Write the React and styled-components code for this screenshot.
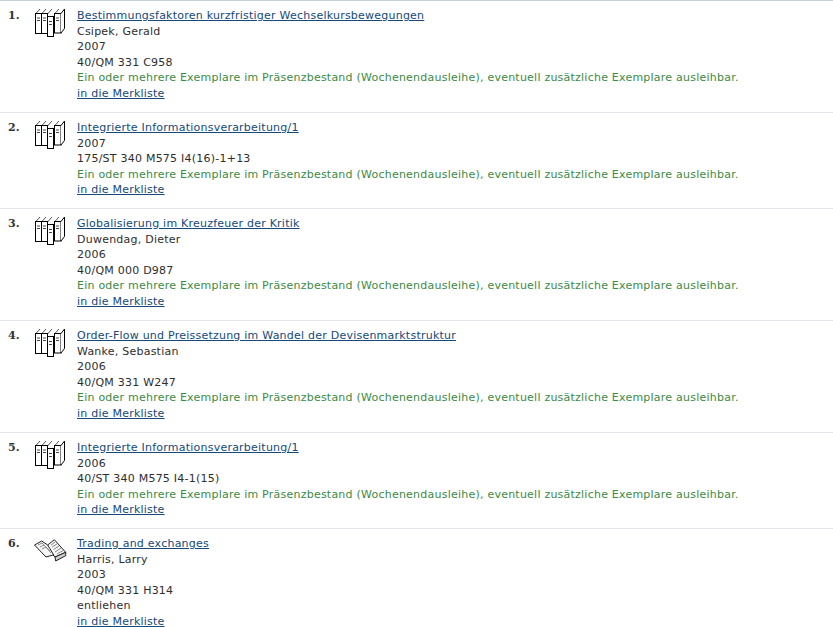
import React from 'react';
import styled, { createGlobalStyle } from 'styled-components';

const GlobalStyle = createGlobalStyle`
  html, body {
    margin: 0;
    padding: 0;
    background: #fff;
  }
`;

const List = styled.div`
  width: 833px;
  height: 627px;
  overflow: hidden;
  border-top: 1px solid #c3cfdc;
  box-sizing: border-box;
  font-family: 'DejaVu Sans', Verdana, sans-serif;
  font-size: 11px;
  line-height: 15.6px;
  letter-spacing: 0.23px;
  color: #2e2e2e;
`;

const Row = styled.div`
  display: grid;
  grid-template-columns: 33px 44px 1fr;
  height: ${(p) => p.$height}px;
  box-sizing: border-box;
  padding-top: 7px;
  border-bottom: 1px solid #e4e4ea;
  &:last-child {
    border-bottom: none;
  }
`;

const Num = styled.div`
  padding-left: 8px;
  font-family: 'DejaVu Serif', Georgia, serif;
  font-weight: bold;
  letter-spacing: 0;
  color: #333;
`;

const IconCell = styled.div`
  padding-top: ${(p) => (p.$book ? 1 : 0)}px;
`;

const Title = styled.a`
  display: block;
  color: #14497a;
  text-decoration: underline;
`;

const Line = styled.div`
  white-space: nowrap;
`;

const Status = styled(Line)`
  color: #3c8a45;
`;

const SeriesIcon = () => (
  <svg width="33" height="30" viewBox="0 0 33 30" fill="#fff" stroke="#000" strokeWidth="1">
    <path d="M2.5 6 L7 1 M8.5 6 L13 1 M14.5 6 L19 1 M21.5 6 L26 1" stroke="#555" fill="none" />
    <rect x="2.5" y="5.5" width="6" height="20" />
    <rect x="8.5" y="5.5" width="6" height="20" />
    <rect x="21.5" y="5.5" width="6.5" height="19.5" />
    <path d="M28 5.5 L31.5 1 V20.5 L28 25" />
    <rect x="14.5" y="8.5" width="6" height="20" />
    <path d="M4 10h3M4 12.5h3M10 10h3M10 12.5h3M16 13.5h3M16 16.5h3M23 10h3M23 12.5h3" stroke="#444" />
  </svg>
);

const BookIcon = () => (
  <svg width="34" height="26" viewBox="0 0 34 26" fill="#fff" stroke="#222" strokeWidth="1">
    <path d="M1.5 8 L8.7 4 L14.7 8 L21.3 2.7 L32.7 15.3 L22 20 L20 18 L13 20 Z" fill="#f6f6f6" />
    <path d="M14.7 8 L21 18.5" fill="none" />
    <path d="M22 20 L22.7 24 L32.7 18.7 V15.3 Z" fill="#ccc" />
    <path d="M5 8 L9 6 L15 12 M7 10 L11 8 L17 14 M9 12 L13 10 L18 16 M18 8 L22 5 M19 10 L24 7 M20.5 12.5 L26 9 M22 15 L28 11 M24 17 L30 13.5" stroke="#888" fill="none" />
  </svg>
);

const STATUS = 'Ein oder mehrere Exemplare im Präsenzbestand (Wochenendausleihe), eventuell zusätzliche Exemplare ausleihbar.';

const items = [
  { title: 'Bestimmungsfaktoren kurzfristiger Wechselkursbewegungen', author: 'Csipek, Gerald', year: '2007', sign: '40/QM 331 C958', status: STATUS, height: 112 },
  { title: 'Integrierte Informationsverarbeitung/1', year: '2007', sign: '175/ST 340 M575 I4(16)-1+13', status: STATUS, height: 96 },
  { title: 'Globalisierung im Kreuzfeuer der Kritik', author: 'Duwendag, Dieter', year: '2006', sign: '40/QM 000 D987', status: STATUS, height: 112 },
  { title: 'Order-Flow und Preissetzung im Wandel der Devisenmarktstruktur', author: 'Wanke, Sebastian', year: '2006', sign: '40/QM 331 W247', status: STATUS, height: 112 },
  { title: 'Integrierte Informationsverarbeitung/1', year: '2006', sign: '40/ST 340 M575 I4-1(15)', status: STATUS, height: 96 },
  { title: 'Trading and exchanges', author: 'Harris, Larry', year: '2003', sign: '40/QM 331 H314', lent: 'entliehen', book: true, height: 98 },
];

export default function App() {
  return (
    <>
      <GlobalStyle />
      <List>
        {items.map((item, i) => (
          <Row key={i} $height={item.height}>
            <Num>{i + 1}.</Num>
            <IconCell $book={item.book}>{item.book ? <BookIcon /> : <SeriesIcon />}</IconCell>
            <div>
              <Title href="#">{item.title}</Title>
              {item.author && <Line>{item.author}</Line>}
              <Line>{item.year}</Line>
              <Line>{item.sign}</Line>
              {item.status ? <Status>{item.status}</Status> : <Line>{item.lent}</Line>}
              <Title href="#">in die Merkliste</Title>
            </div>
          </Row>
        ))}
      </List>
    </>
  );
}
